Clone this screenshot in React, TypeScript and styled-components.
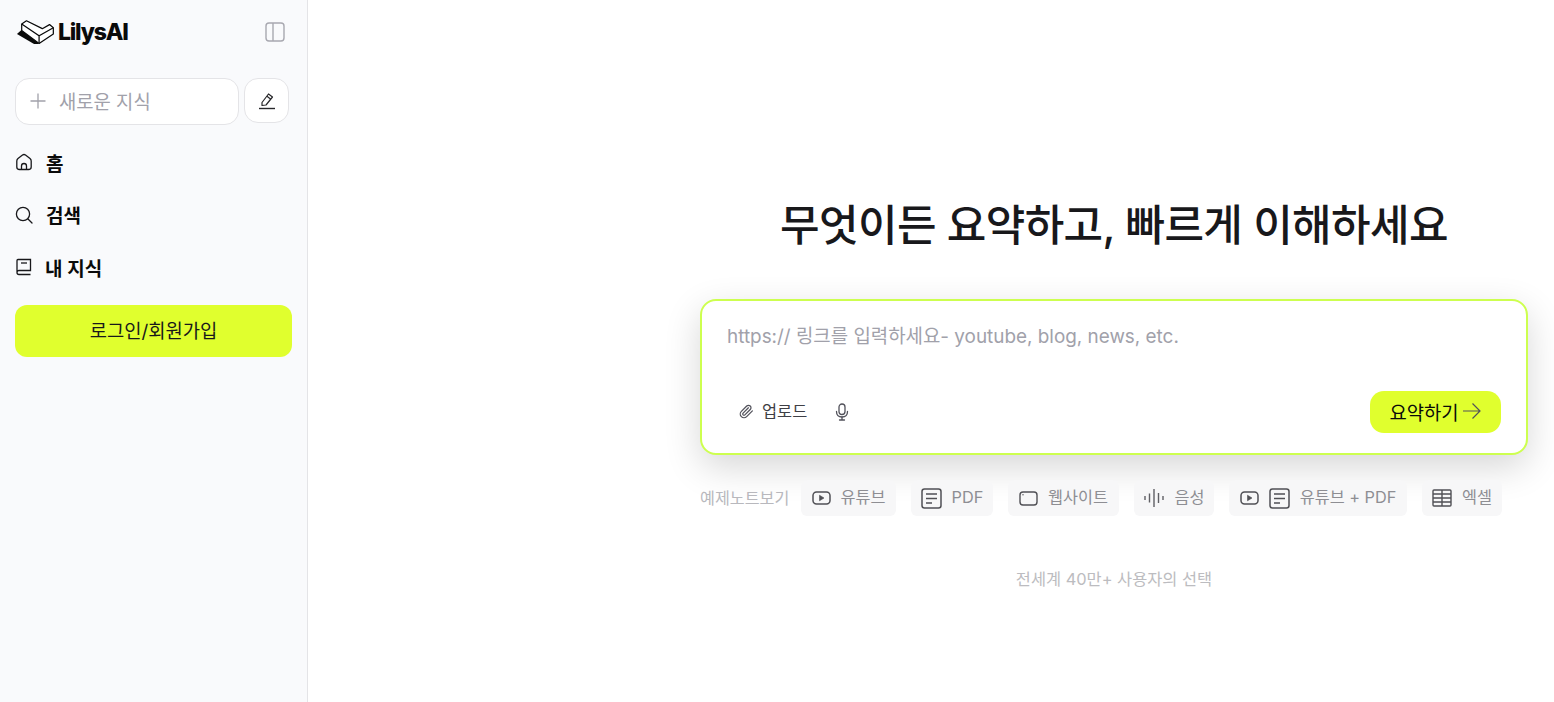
import React from "react";
import styled, { createGlobalStyle } from "styled-components";

const Global = createGlobalStyle`
  html, body { margin: 0; padding: 0; height: 100%; background: #fff; }
  body { font-family: Inter, "Noto Sans CJK KR", sans-serif; overflow: hidden; }
  * { box-sizing: border-box; }
`;

const Page = styled.div`
  display: flex;
  width: 100%;
  height: 702px;
`;

const Sidebar = styled.aside`
  width: 308px;
  flex: none;
  height: 100%;
  background: #f9fafc;
  border-right: 1px solid #e4e4e7;
  padding: 14px 15px 0 15px;
  display: flex;
  flex-direction: column;
`;

const TopRow = styled.div`
  display: flex;
  align-items: center;
  justify-content: space-between;
  height: 36px;
  padding: 0 7px 0 1px;
`;

const LogoWrap = styled.div`
  display: flex;
  align-items: center;
  gap: 4px;
`;

const LogoText = styled.span`
  font-family: Inter, sans-serif;
  font-weight: 800;
  font-size: 23px;
  letter-spacing: -1.2px;
  color: #0a0a0a;
`;

const NewRow = styled.div`
  display: flex;
  gap: 5px;
  margin-top: 28px;
`;

const NewInput = styled.div`
  width: 224px;
  height: 47px;
  background: #fff;
  border: 1px solid #e4e4e7;
  border-radius: 14px;
  display: flex;
  align-items: center;
  padding: 0 0 2px 13px;
  gap: 12px;
  font-size: 18.8px;
  color: #a1a1aa;
`;

const EditButton = styled.div`
  width: 45px;
  height: 45px;
  background: #fff;
  border: 1px solid #e4e4e7;
  border-radius: 14px;
  display: flex;
  align-items: center;
  justify-content: center;
`;

const Nav = styled.nav`
  display: flex;
  flex-direction: column;
  margin-top: 11px;
`;

const NavItem = styled.div<{ $gap: number }>`
  display: flex;
  align-items: center;
  height: 52.5px;
  gap: ${(p) => p.$gap}px;
  font-size: 19px;
  font-weight: 600;
  color: #0a0a0a;
`;

const LoginButton = styled.div`
  width: 277px;
  height: 52px;
  margin-top: 11px;
  border-radius: 12px;
  background: #e0ff2e;
  display: flex;
  align-items: center;
  justify-content: center;
  padding-bottom: 2px;
  font-size: 18.8px;
  color: #18181b;
`;

const Main = styled.main`
  flex: 1;
  padding: 197px 0 0 392px;
  display: flex;
  flex-direction: column;
`;

const Column = styled.div`
  width: 828px;
  display: flex;
  flex-direction: column;
`;

const Title = styled.h1`
  margin: 0;
  text-align: center;
  font-size: 43px;
  line-height: 56px;
  font-weight: 500;
  letter-spacing: -0.6px;
  color: #18181b;
`;

const Card = styled.div`
  margin-top: 46px;
  height: 156px;
  background: #fff;
  border: 2px solid #cdff4f;
  border-radius: 16px;
  box-shadow: 0 12px 36px rgba(0, 0, 0, 0.16);
  padding: 24px 25px 20px 25px;
  display: flex;
  flex-direction: column;
  justify-content: space-between;
`;

const Placeholder = styled.div`
  font-size: 18.9px;
  line-height: 24px;
  color: #a1a1aa;
`;

const CardFooter = styled.div`
  display: flex;
  align-items: center;
  justify-content: space-between;
`;

const Tools = styled.div`
  display: flex;
  align-items: center;
  padding-left: 12px;
  gap: 27px;
`;

const Upload = styled.div`
  display: flex;
  align-items: center;
  gap: 8px;
  font-size: 16.4px;
  line-height: 20px;
  padding-bottom: 2px;
  color: #3f3f46;
`;

const Summarize = styled.div`
  width: 131px;
  height: 42px;
  border-radius: 14px;
  background: #e0ff2e;
  display: flex;
  align-items: center;
  justify-content: center;
  gap: 3px;
  padding-bottom: 2px;
  font-size: 18.8px;
  color: #0a0a0a;
`;

const Examples = styled.div`
  display: flex;
  align-items: center;
  margin-top: 25px;
  gap: 15px;
`;

const ExLabel = styled.span`
  font-size: 16.2px;
  line-height: 36px;
  height: 36px;
  padding-bottom: 2px;
  color: #b8b8bd;
  margin-right: -4px;
  width: 90px;
  white-space: nowrap;
`;

const Chip = styled.div<{ $w: number }>`
  width: ${(p) => p.$w}px;
  height: 36px;
  border-radius: 6px;
  background: #f7f7f8;
  display: flex;
  align-items: center;
  justify-content: center;
  gap: 10px;
  font-size: 16.3px;
  color: #8e8e93;
  white-space: nowrap;
`;

const ChipLabel = styled.span`
  line-height: 20px;
  margin-top: -2px;
`;

const Trust = styled.div`
  margin-top: 52px;
  text-align: center;
  font-size: 16.4px;
  line-height: 22px;
  color: #bcbcc0;
`;

const Logo = () => (
  <svg width="38" height="26" viewBox="0 0 40 27" fill="none">
    <path d="M1 15.5 L6 11 L23.5 21.5 V26 L19 26 Z" fill="#0a0a0a" />
    <path d="M6 5 L11 1.7 L27.7 10 L35.3 5.7 L39.3 9 V15.5 L24.3 25.5 L6 12 Z" fill="#fff" stroke="#0a0a0a" strokeWidth="1.3" strokeLinejoin="round" />
    <path d="M6 5 L24.3 17.5 L39.3 9 M24.3 17.5 V25.5" stroke="#0a0a0a" strokeWidth="1.3" />
  </svg>
);

const PanelIcon = () => (
  <svg width="20" height="20" viewBox="0 0 20 20" fill="none" stroke="#a8a8b0" strokeWidth="1.4">
    <rect x="1" y="1" width="18" height="18" rx="3" />
    <path d="M8 1v18" />
  </svg>
);

const PlusIcon = () => (
  <svg width="18" height="18" viewBox="0 0 18 18" fill="none" stroke="#a1a1aa" strokeWidth="1.3">
    <path d="M9 1.5v15M1.5 9h15" />
  </svg>
);

const EditIcon = () => (
  <svg width="18" height="18" viewBox="0 0 18 18" fill="none" stroke="#27272a" strokeWidth="1.2" strokeLinejoin="round">
    <path d="M4 10.5 L10.5 2 L14.5 5 L8 13 L4 13.5 Z" />
    <path d="M9 4.2 L12.8 7.2" />
    <path d="M1 16.5h16" strokeWidth="1.4" />
  </svg>
);

const HomeIcon = () => (
  <svg width="18" height="18" viewBox="0 0 18 18" fill="none" stroke="#18181b" strokeWidth="1.3" strokeLinejoin="round">
    <path d="M1.8 8 Q1.8 6.5 3 5.5 L7.5 2 Q9 1 10.5 2 L15 5.5 Q16.2 6.5 16.2 8 V14 Q16.2 16.5 13.5 16.5 H4.5 Q1.8 16.5 1.8 14 Z" />
    <path d="M6.5 16.5 V13 Q6.5 10.5 9 10.5 Q11.5 10.5 11.5 13 V16.5" />
  </svg>
);

const SearchIcon = () => (
  <svg width="18" height="18" viewBox="0 0 18 18" fill="none" stroke="#18181b" strokeWidth="1.3" strokeLinecap="round">
    <circle cx="8" cy="8" r="6.6" />
    <path d="M13 13l4 4" />
  </svg>
);

const BookIcon = () => (
  <svg width="18" height="18" viewBox="0 0 18 18" fill="none" stroke="#18181b" strokeWidth="1.3">
    <path d="M2 14.5 V2.5 Q2 1.5 3 1.5 H15.5 V12.5 H4 Q2 12.5 2 14.5 Q2 16.5 4 16.5 H15.5" />
    <path d="M6 5h6" />
  </svg>
);

const ClipIcon = () => (
  <svg width="15" height="15" viewBox="0 0 24 24" fill="none" stroke="#52525b" strokeWidth="2" strokeLinecap="round" strokeLinejoin="round">
    <path d="m21.44 11.05-9.19 9.19a6 6 0 0 1-8.49-8.49l8.57-8.57A4 4 0 1 1 18 8.84l-8.59 8.57a2 2 0 0 1-2.83-2.83l8.49-8.48" />
  </svg>
);

const MicIcon = () => (
  <svg width="16" height="18" viewBox="0 0 16 18" fill="none" stroke="#52525b" strokeWidth="1.3" strokeLinecap="round">
    <rect x="5" y="1" width="6" height="10.5" rx="3" />
    <path d="M2.5 8.5 Q2.5 14 8 14 Q13.5 14 13.5 8.5" />
    <path d="M8 14v3M5.5 17h5" />
  </svg>
);

const ArrowIcon = () => (
  <svg width="20" height="18" viewBox="0 0 20 18" fill="none" stroke="#52525b" strokeWidth="1.2">
    <path d="M1 9h17M10.5 1.5 18 9l-7.5 7.5" />
  </svg>
);

const PlayIcon = () => (
  <svg width="19" height="14" viewBox="0 0 19 14" fill="none" stroke="#505055" strokeWidth="1.5">
    <rect x="1" y="1" width="17" height="12" rx="3.5" />
    <path d="M7.5 4.2 L12 7 L7.5 9.8 Z" fill="#505055" strokeWidth="0.6" />
  </svg>
);

const DocIcon = () => (
  <svg width="21" height="21" viewBox="0 0 21 21" fill="none" stroke="#505055" strokeWidth="1.5">
    <rect x="1" y="1" width="19" height="19" rx="2.5" />
    <path d="M5 6h11M5 10.5h11M5 15h6" />
  </svg>
);

const WebIcon = () => (
  <svg width="19" height="15" viewBox="0 0 19 15" fill="none" stroke="#505055" strokeWidth="1.4">
    <rect x="1" y="1" width="17" height="13" rx="3" />
    <circle cx="4" cy="3.7" r="0.7" fill="#505055" stroke="none" />
  </svg>
);

const WaveIcon = () => (
  <svg width="21" height="20" viewBox="0 0 21 20" fill="none" stroke="#606065" strokeWidth="1.4">
    <path d="M1 8v4M5.5 5.5v9M10 1v18M14.5 5v10M19 8v4" />
  </svg>
);

const TableIcon = () => (
  <svg width="20" height="18" viewBox="0 0 20 18" fill="none" stroke="#505055" strokeWidth="1.4">
    <rect x="1" y="1" width="18" height="16" rx="1" />
    <path d="M1 5h18M1 9h18M1 13h18M10 1v16" />
  </svg>
);

export default function App() {
  return (
    <Page>
      <Global />
      <Sidebar>
        <TopRow>
          <LogoWrap>
            <Logo />
            <LogoText>LilysAI</LogoText>
          </LogoWrap>
          <PanelIcon />
        </TopRow>
        <NewRow>
          <NewInput>
            <PlusIcon />
            새로운 지식
          </NewInput>
          <EditButton>
            <EditIcon />
          </EditButton>
        </NewRow>
        <Nav>
          <NavItem $gap={13}>
            <HomeIcon />홈
          </NavItem>
          <NavItem $gap={13}>
            <SearchIcon />검색
          </NavItem>
          <NavItem $gap={12}>
            <BookIcon />내 지식
          </NavItem>
        </Nav>
        <LoginButton>로그인/회원가입</LoginButton>
      </Sidebar>
      <Main>
        <Column>
          <Title>무엇이든 요약하고, 빠르게 이해하세요</Title>
          <Card>
            <Placeholder>https:// 링크를 입력하세요- youtube, blog, news, etc.</Placeholder>
            <CardFooter>
              <Tools>
                <Upload>
                  <ClipIcon />
                  업로드
                </Upload>
                <MicIcon />
              </Tools>
              <Summarize>
                요약하기
                <ArrowIcon />
              </Summarize>
            </CardFooter>
          </Card>
          <Examples>
            <ExLabel>예제노트보기</ExLabel>
            <Chip $w={95}><PlayIcon /><ChipLabel>유튜브</ChipLabel></Chip>
            <Chip $w={82}><DocIcon /><ChipLabel>PDF</ChipLabel></Chip>
            <Chip $w={111}><WebIcon /><ChipLabel>웹사이트</ChipLabel></Chip>
            <Chip $w={80}><WaveIcon /><ChipLabel>음성</ChipLabel></Chip>
            <Chip $w={178}><PlayIcon /><DocIcon /><ChipLabel>유튜브 + PDF</ChipLabel></Chip>
            <Chip $w={80}><TableIcon /><ChipLabel>엑셀</ChipLabel></Chip>
          </Examples>
          <Trust>전세계 40만+ 사용자의 선택</Trust>
        </Column>
      </Main>
    </Page>
  );
}
